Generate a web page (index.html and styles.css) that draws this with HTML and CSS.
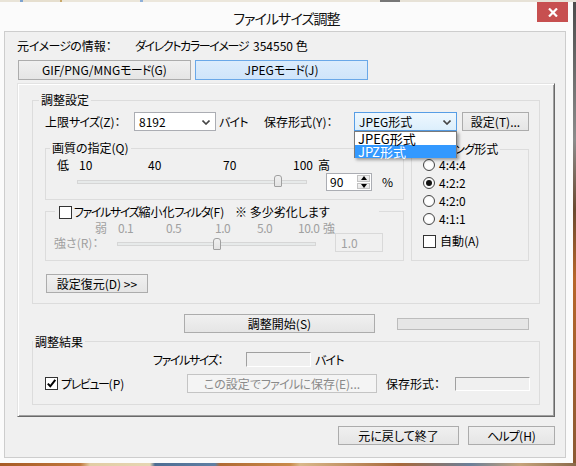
FILE: index.html
```html
<!DOCTYPE html>
<html lang="ja">
<head>
<meta charset="utf-8">
<title>ファイルサイズ調整</title>
<link rel="stylesheet" href="styles.css">
</head>
<body>
<div class="desk-top"></div>
<div class="main-row">
  <div class="window">
    <div class="titlebar">
      <div class="title">ファイルサイズ調整</div>
      <div class="close">
        <svg width="10" height="9" viewBox="0 0 10 9"><path d="M1 0.5 L9 8.5 M9 0.5 L1 8.5" stroke="#fff" stroke-width="2.2" fill="none"/></svg>
      </div>
    </div>
    <div class="client">
      <div class="info"><span class="info-label">元<span class="k">イメージ</span>の情報：</span><span><span class="k kk">ダイレクトカラーイメージ</span><span class="num">354550 色</span></span></div>
      <div class="modes">
        <div class="btn mode">GIF/PNG/MNG<span class="k">モード</span>(G)</div>
        <div class="btn mode active">JPEG<span class="k">モード</span>(J)</div>
      </div>
      <div class="panel">
        <div class="group g-settings">
          <div class="legend lg-settings"><span>調整設定</span></div>
          <div class="row r-limit">
            <span class="l-limit">上限<span class="k">サイズ</span>(Z)：</span>
            <div class="combo c-size"><span>8192</span>
              <svg class="chev" width="8" height="5" viewBox="0 0 8 5"><path d="M0.5 0.5 L4 4 L7.5 0.5" stroke="#444" stroke-width="1.6" fill="none"/></svg>
            </div>
            <span class="l-byte k">バイト</span>
            <span class="l-format">保存形式(Y)：</span>
            <div class="combo c-format"><span>JPEG形式</span>
              <svg class="chev" width="8" height="5" viewBox="0 0 8 5"><path d="M0.5 0.5 L4 4 L7.5 0.5" stroke="#444" stroke-width="1.6" fill="none"/></svg>
              <div class="droplist">
                <div class="opt">JPEG形式</div>
                <div class="opt sel">JPZ形式</div>
              </div>
            </div>
            <div class="btn b-setting">設定(T)...</div>
          </div>
          <div class="cols">
            <div class="col-left">
              <div class="group g-quality">
                <div class="legend lg-quality"><span>画質の指定(Q)</span></div>
                <div class="ticks q-ticks">
                  <span class="t1">低</span><span class="t2">10</span><span class="t3">40</span><span class="t4">70</span><span class="t5">100</span><span>高</span>
                </div>
                <div class="row q-slider">
                  <div class="track-wrap q-track">
                    <div class="track"></div>
                    <div class="thumb"></div>
                  </div>
                  <div class="spinner">
                    <span class="spin-val">90</span>
                    <div class="spin-btns">
                      <div class="spin-up"><i class="tri-up"></i></div>
                      <div class="spin-down"><i class="tri-down"></i></div>
                    </div>
                  </div>
                  <span class="pct">%</span>
                </div>
              </div>
              <div class="group g-filter">
                <div class="legend lg-filter">
                  <span class="lg-filter-inner"><i class="check"></i><span class="f-label"><span class="k kk">ファイルサイズ</span>縮小化<span class="k kk">フィルタ</span>(F)</span><span>※ 多少劣化します</span></span>
                </div>
                <div class="ticks f-ticks">
                  <span class="s1">弱</span><span class="s2">0.1</span><span class="s3">0.5</span><span class="s4">1.0</span><span class="s5">5.0</span><span class="s6">10.0</span><span>強</span>
                </div>
                <div class="row f-slider">
                  <span class="l-strength">強さ(R)：</span>
                  <div class="track-wrap f-track">
                    <div class="track"></div>
                    <div class="thumb"></div>
                  </div>
                  <div class="edit-dis">1.0</div>
                </div>
              </div>
            </div>
            <div class="group g-sampling">
              <div class="legend lg-sampling"><span><span class="k">サンプリング</span>形式</span></div>
              <div class="radio-row"><i class="radio"></i><span>4:4:4</span></div>
              <div class="radio-row"><i class="radio on"></i><span>4:2:2</span></div>
              <div class="radio-row"><i class="radio"></i><span>4:2:0</span></div>
              <div class="radio-row"><i class="radio"></i><span>4:1:1</span></div>
              <div class="radio-row auto-row"><i class="check"></i><span>自動(A)</span></div>
            </div>
          </div>
          <div class="btn b-restore">設定復元(D) &gt;&gt;</div>
        </div>
        <div class="row r-start">
          <div class="btn b-start">調整開始(S)</div>
          <div class="progress"></div>
        </div>
        <div class="group g-result">
          <div class="legend lg-result"><span>調整結果</span></div>
          <div class="row res1">
            <span class="l-fsize"><span class="k kk">ファイルサイズ</span>：</span>
            <div class="static s-size"></div>
            <span class="l-byte2 k">バイト</span>
          </div>
          <div class="row res2">
            <i class="check checked">
              <svg width="11" height="11" viewBox="0 0 11 11"><path d="M1.8 5.6 L4.3 8.3 L9.3 1.8" stroke="#000" stroke-width="2" fill="none"/></svg>
            </i>
            <span class="l-preview"><span class="k kk">プレビュー</span>(P)</span>
            <div class="btn b-save disabled">この設定で<span class="k">ファイル</span>に保存(E)...</div>
            <span class="l-format2">保存形式：</span>
            <div class="static s-format"></div>
          </div>
        </div>
      </div>
      <div class="footer">
        <div class="btn b-cancel">元に戻して終了</div>
        <div class="btn b-help"><span class="k">ヘルプ</span>(H)</div>
      </div>
    </div>
  </div>
  <div class="desk-right"></div>
</div>
<div class="desk-bottom"></div>
</body>
</html>
```
FILE: styles.css
```css
* { box-sizing: border-box; margin: 0; padding: 0; }
html, body { width: 576px; height: 466px; overflow: hidden; }
body {
  background: #6b6b6b;
  font-family: "Noto Sans CJK JP", sans-serif;
  font-size: 12px;
  line-height: 14px;
  color: #000;
  font-feature-settings: "palt";
}
i { display: block; font-style: normal; }
.k { letter-spacing: -0.8px; }
.kk { letter-spacing: -1.4px; }
.num { margin-left: 5px; }

.desk-top {
  height: 2px;
  background: linear-gradient(90deg, #e9e4d8 0, #e9e4d8 20px, #7ea3cf 20px, #7ea3cf 23px, #e6dfcf 23px, #e6dfcf 60px, #c9a86a 60px, #c9a86a 62px, #ebe6da 62px, #ebe6da 140px, #8fb0d8 140px, #8fb0d8 143px, #ece7dc 143px, #ece7dc 380px, #777 380px, #777 400px, #e7e2d7 400px);
}
.main-row { display: flex; height: 461px; }
.window { width: 573px; height: 461px; background: #fbfbfb; }
.desk-right { flex: 1; background: linear-gradient(#4c4c4c, #8c8c8c 30%, #6a4a30 45%, #b7662a 60%, #8a5a34); }
.desk-bottom {
  height: 3px;
  background: linear-gradient(90deg, #a65a24 0, #c0773c 80px, #e2cda4 90px, #e6d6b3 150px, #4d6d93 155px, #5f7fa3 215px, #b06a33 220px, #c98a4a 290px, #d9b88a 300px, #a7683a 400px, #6b7f99 470px, #c5a37a 520px, #8a6a4a 576px);
}

/* title bar */
.titlebar { display: grid; height: 29px; }
.title, .close { grid-area: 1 / 1; }
.title {
  text-align: center;
  font-size: 14px;
  letter-spacing: -0.9px;
  line-height: 20px;
  padding-top: 6px;
  color: #111;
}
.close {
  justify-self: end;
  width: 31px;
  height: 20px;
  margin-right: 5px;
  background: #c75050;
  display: flex;
  align-items: center;
  justify-content: center;
}

/* client */
.client {
  margin-left: 4px;
  width: 562px;
  height: 427px;
  border: 1px solid #cdcdcd;
  background: #f0f0f0;
  padding: 7px 0 0 12px;
}
.info { display: flex; height: 14px; white-space: nowrap; }
.info-label { width: 118px; flex: none; }
.modes { display: flex; gap: 4px; margin: 7px 0 0 1px; }
.btn {
  border: 1px solid #acacac;
  background: linear-gradient(#f0f0f0, #e5e5e5);
  display: flex;
  align-items: center;
  justify-content: center;
  white-space: nowrap;
}
.mode { width: 173px; height: 20px; }
.mode.active { background: linear-gradient(#dcecfc, #cfe5fa); border-color: #6aa8e8; }

.panel {
  margin-top: 3px;
  width: 538px;
  height: 334px;
  border: 1px solid;
  border-color: #e3e3e3 #696969 #696969 #e3e3e3;
  box-shadow: inset 1px 1px #fff, inset -1px -1px #a0a0a0;
  padding: 16px 0 0 14px;
}

.group { border: 1px solid #dcdcdc; }
.legend { display: flex; height: 14px; line-height: 14px; white-space: nowrap; }
.legend > span { background: #f0f0f0; padding: 0 2px; }
.row { display: flex; align-items: center; white-space: nowrap; }
.row > * { flex: none; }

/* settings group */
.g-settings { width: 508px; height: 204px; }
.lg-settings { margin: -8px 0 0 6px; }
.r-limit { margin-top: 5px; height: 19px; }
.l-limit { margin-left: 12px; width: 89px; }
.combo {
  height: 19px;
  border: 1px solid #abadb3;
  background: #fff;
  display: flex;
  align-items: center;
  padding-left: 4px;
  position: relative;
}
.combo .chev { position: absolute; right: 5px; top: 7px; }
.c-size { width: 82px; }
.l-byte { margin-left: 3px; width: 45px; }
.l-format { width: 90px; }
.c-format {
  width: 103px;
  border-color: #569de5;
  background: linear-gradient(#eef7fe, #dceffc);
}
.droplist {
  position: absolute;
  left: -1px;
  top: 18px;
  width: 103px;
  height: 27px;
  border: 1px solid #7a7a7a;
  background: #fff;
  box-shadow: 2px 2px 3px rgba(0,0,0,0.35);
  z-index: 5;
  font-size: 13px;
}
.opt { height: 13px; line-height: 13px; padding-left: 3px; }
.opt.sel { background: #3399ff; color: #fff; }
.b-setting { margin-left: 5px; width: 67px; height: 19px; }

.cols { display: flex; align-items: flex-start; margin-top: 17px; }
.col-left { margin-left: 12px; }

/* quality */
.g-quality { width: 359px; height: 52px; }
.lg-quality { margin: -8px 0 0 4px; }
.ticks { display: flex; white-space: nowrap; }
.ticks > span { flex: none; }
.q-ticks { margin-top: 3px; height: 14px; }
.t1 { margin-left: 11px; width: 22px; }
.t2 { width: 69px; }
.t3 { width: 75px; }
.t4 { width: 70px; }
.t5 { width: 25px; }
.q-slider { margin-top: 1px; height: 18px; }
.track-wrap { position: relative; height: 18px; }
.track {
  position: absolute;
  left: 0; right: 0;
  height: 4px;
  background: #e7eaea;
  border: 1px solid #d6d6d6;
}
.thumb {
  position: absolute;
  width: 8px;
  height: 12px;
  background: linear-gradient(#f0f0f0, #e3e3e3);
  border: 1px solid #a0a0a0;
  border-radius: 3px 3px 1px 1px;
}
.q-track { margin-left: 31px; width: 230px; }
.q-track .track { top: 7px; }
.q-track .thumb { left: 197px; top: 2px; }
.spinner {
  margin-left: 19px;
  width: 46px;
  height: 18px;
  border: 1px solid #abadb3;
  background: #fff;
  display: flex;
}
.spin-val { flex: 1; padding-left: 3px; line-height: 16px; }
.spin-btns { width: 14px; display: flex; flex-direction: column; padding: 1px 1px 1px 0; gap: 1px; }
.spin-up, .spin-down {
  flex: 1;
  background: linear-gradient(#f3f3f3, #e6e6e6);
  border: 1px solid #c3c3c3;
  display: flex;
  align-items: center;
  justify-content: center;
}
.tri-up { width: 0; height: 0; border-left: 3px solid transparent; border-right: 3px solid transparent; border-bottom: 4px solid #000; }
.tri-down { width: 0; height: 0; border-left: 3px solid transparent; border-right: 3px solid transparent; border-top: 4px solid #000; }
.pct { margin-left: 10px; }

/* filter */
.g-filter { width: 359px; height: 50px; margin-top: 11px; }
.lg-filter { margin: -7px 0 0 9px; }
.lg-filter-inner {
  display: flex;
  align-items: center;
  width: 324px;
  padding: 0 0 0 4px !important;
  background: #f0f0f0;
  white-space: nowrap;
}
.lg-filter-inner > * { flex: none; }
.check {
  width: 13px;
  height: 13px;
  border: 1px solid #333;
  background: #fff;
  flex: none;
}
.check.checked { display: flex; align-items: center; justify-content: center; }
.f-label { margin-left: 2px; width: 161px; }
.f-ticks { margin-top: 3px; height: 12px; line-height: 12px; color: #a0a0a0; letter-spacing: -0.5px; }
.s1 { margin-left: 49px; width: 23px; }
.s2 { width: 48px; }
.s3 { width: 49px; }
.s4 { width: 42px; }
.s5 { width: 41px; }
.s6 { width: 25px; }
.f-slider { margin-top: -1px; height: 19px; }
.l-strength { margin-left: 8px; width: 63px; color: #a0a0a0; }
.f-track { width: 199px; height: 19px; }
.f-track .track { top: 9px; }
.f-track .thumb { left: 96px; top: 5px; }
.edit-dis {
  margin-left: 19px;
  width: 48px;
  height: 19px;
  border: 1px solid #d9d9d9;
  background: #f0f0f0;
  color: #a0a0a0;
  padding-left: 5px;
  line-height: 17px;
}

/* sampling */
.g-sampling { width: 118px; height: 112px; margin: 1px 0 0 7px; }
.lg-sampling { margin: -8px 0 0 1px; }
.radio-row { display: flex; align-items: center; height: 18px; }
.radio {
  margin-left: 11px;
  width: 12px;
  height: 12px;
  border: 1px solid #444;
  border-radius: 50%;
  background: radial-gradient(#fff 40%, #ececec);
  display: flex;
  align-items: center;
  justify-content: center;
  flex: none;
}
.radio.on::after { content: ""; width: 6px; height: 6px; border-radius: 50%; background: #111; }
.radio-row span { margin-left: 4px; }
.auto-row { margin-top: 4px; }
.auto-row .check { margin-left: 11px; }

.b-restore { margin: 13px 0 0 13px; width: 102px; height: 19px; }

/* start row */
.r-start { margin-top: 10px; height: 19px; }
.b-start { margin-left: 152px; width: 191px; height: 19px; }
.progress { margin-left: 22px; width: 132px; height: 12px; background: #e6e6e6; border: 1px solid #bcbcbc; }

/* result */
.g-result { width: 508px; height: 64px; margin-top: 8px; }
.lg-result { margin: -7px 0 0 0; }
.res1 { margin-top: 3px; height: 15px; }
.l-fsize { margin-left: 120px; width: 93px; }
.static { border: 1px solid; border-color: #a0a0a0 #fff #fff #a0a0a0; }
.s-size { width: 65px; height: 15px; }
.l-byte2 { margin-left: 4px; }
.res2 { margin-top: 7px; height: 19px; }
.res2 .check { margin-left: 12px; }
.l-preview { margin-left: 3px; width: 126px; }
.b-save { width: 190px; height: 19px; }
.btn.disabled { background: #f4f4f4; border-color: #c4c4c4; color: #8a8a8a; }
.l-format2 { margin-left: 9px; width: 69px; }
.s-format { width: 75px; height: 14px; }

/* footer */
.footer { display: flex; justify-content: flex-end; gap: 9px; width: 538px; margin-top: 9px; }
.b-cancel { width: 121px; height: 19px; }
.b-help { width: 87px; height: 19px; }
```
